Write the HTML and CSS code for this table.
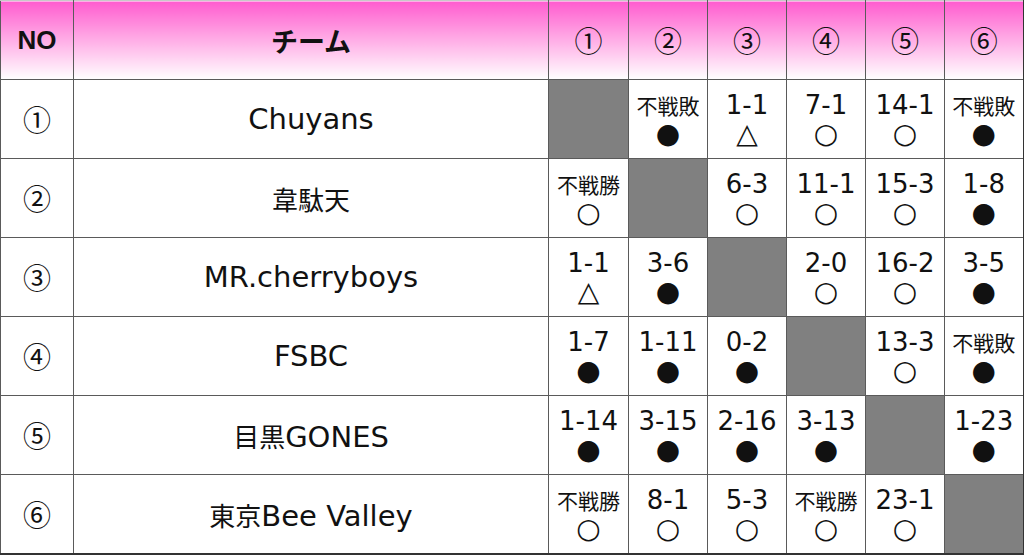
FILE: index.html
```html
<!DOCTYPE html>
<html lang="ja">
<head>
<meta charset="utf-8">
<link rel="stylesheet" href="styles.css">
</head>
<body>
<table class="league">
  <colgroup>
    <col class="c-no"><col class="c-team">
    <col class="c-first"><col class="c-res"><col class="c-res"><col class="c-res"><col class="c-res"><col class="c-res">
  </colgroup>
  <thead>
    <tr>
      <th class="h-label">NO</th>
      <th class="h-label h-team">チーム</th>
      <th class="h-num">①</th><th class="h-num">②</th><th class="h-num">③</th><th class="h-num">④</th><th class="h-num">⑤</th><th class="h-num">⑥</th>
    </tr>
  </thead>
  <tbody>
    <tr>
      <td class="no">①</td><td class="team">Chuyans</td>
      <td class="self"></td>
      <td><div class="fw">不戦敗</div><div class="mk">●</div></td>
      <td><div class="sc">1-1</div><div class="mk">△</div></td>
      <td><div class="sc">7-1</div><div class="mk">○</div></td>
      <td><div class="sc">14-1</div><div class="mk">○</div></td>
      <td><div class="fw">不戦敗</div><div class="mk">●</div></td>
    </tr>
    <tr>
      <td class="no">②</td><td class="team"><span class="jp">韋駄天</span></td>
      <td><div class="fw">不戦勝</div><div class="mk">○</div></td>
      <td class="self"></td>
      <td><div class="sc">6-3</div><div class="mk">○</div></td>
      <td><div class="sc">11-1</div><div class="mk">○</div></td>
      <td><div class="sc">15-3</div><div class="mk">○</div></td>
      <td><div class="sc">1-8</div><div class="mk">●</div></td>
    </tr>
    <tr>
      <td class="no">③</td><td class="team">MR.cherryboys</td>
      <td><div class="sc">1-1</div><div class="mk">△</div></td>
      <td><div class="sc">3-6</div><div class="mk">●</div></td>
      <td class="self"></td>
      <td><div class="sc">2-0</div><div class="mk">○</div></td>
      <td><div class="sc">16-2</div><div class="mk">○</div></td>
      <td><div class="sc">3-5</div><div class="mk">●</div></td>
    </tr>
    <tr>
      <td class="no">④</td><td class="team">FSBC</td>
      <td><div class="sc">1-7</div><div class="mk">●</div></td>
      <td><div class="sc">1-11</div><div class="mk">●</div></td>
      <td><div class="sc">0-2</div><div class="mk">●</div></td>
      <td class="self"></td>
      <td><div class="sc">13-3</div><div class="mk">○</div></td>
      <td><div class="fw">不戦敗</div><div class="mk">●</div></td>
    </tr>
    <tr>
      <td class="no">⑤</td><td class="team"><span class="jp">目黒</span>GONES</td>
      <td><div class="sc">1-14</div><div class="mk">●</div></td>
      <td><div class="sc">3-15</div><div class="mk">●</div></td>
      <td><div class="sc">2-16</div><div class="mk">●</div></td>
      <td><div class="sc">3-13</div><div class="mk">●</div></td>
      <td class="self"></td>
      <td><div class="sc">1-23</div><div class="mk">●</div></td>
    </tr>
    <tr>
      <td class="no">⑥</td><td class="team"><span class="jp">東京</span>Bee Valley</td>
      <td><div class="fw">不戦勝</div><div class="mk">○</div></td>
      <td><div class="sc">8-1</div><div class="mk">○</div></td>
      <td><div class="sc">5-3</div><div class="mk">○</div></td>
      <td><div class="fw">不戦勝</div><div class="mk">○</div></td>
      <td><div class="sc">23-1</div><div class="mk">○</div></td>
      <td class="self"></td>
    </tr>
  </tbody>
</table>
</body>
</html>
```

FILE: styles.css
```css
html, body {
  margin: 0;
  padding: 0;
  background: #ffffff;
}

.league {
  width: 1024px;
  height: 555px;
  border-collapse: collapse;
  table-layout: fixed;
  font-family: "DejaVu Sans", "Noto Sans CJK JP", sans-serif;
  color: #111;
  border-top: 1px solid #c8c8c8;
  border-left: 1px solid #c8c8c8;
  border-right: 2px solid #333;
  border-bottom: 2px solid #333;
}

.c-no { width: 73px; }
.c-team { width: 475px; }
.c-first { width: 80px; }
.c-res { width: 79px; }

.league th,
.league td {
  border: 1px solid #5a5a5a;
  padding: 0;
  text-align: center;
  vertical-align: middle;
}

.league thead tr { height: 79px; }
.league tbody tr { height: 79px; }

.league th {
  background: linear-gradient(to bottom, #ff5ccf 0%, #ffa6e4 45%, #ffffff 100%);
  border-top-color: #c8c8c8;
}

.h-label {
  font-family: "Liberation Sans", "Noto Sans CJK JP", sans-serif;
  font-weight: bold;
  font-size: 26px;
}

.h-team {
  font-family: "Noto Sans CJK JP", sans-serif;
  font-size: 27px;
}

.h-num,
.no {
  font-family: "Noto Sans CJK JP", sans-serif;
  font-weight: normal;
  font-size: 28px;
  line-height: 32px;
}

.team {
  font-size: 29px;
  padding-top: 5px;
}

.jp {
  font-family: "Noto Sans CJK JP", sans-serif;
  font-size: 26px;
}

.self {
  background: #808080;
}

.sc {
  font-size: 26px;
  line-height: 29px;
  padding-top: 1px;
}

.fw {
  font-family: "Noto Sans CJK JP", sans-serif;
  font-size: 21px;
  line-height: 29px;
  padding-top: 1px;
}

.mk {
  font-size: 28px;
  line-height: 28px;
}
```
